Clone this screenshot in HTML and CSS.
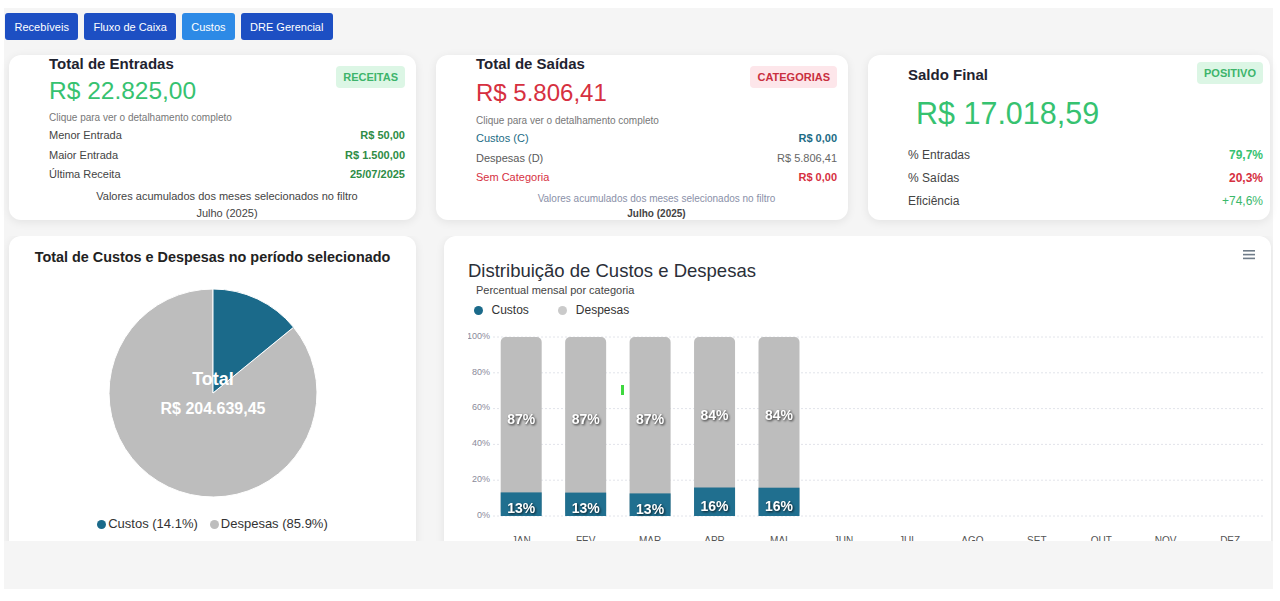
FILE: index.html
```html
<!DOCTYPE html>
<html lang="pt-BR">
<head>
  <meta charset="UTF-8">
  <title>Custos</title>
  <link rel="stylesheet" href="styles.css">
</head>
<body>
  <div class="page">
    <!-- Abas -->
    <nav class="tabs">
      <button class="tab">Recebíveis</button>
      <button class="tab">Fluxo de Caixa</button>
      <button class="tab active">Custos</button>
      <button class="tab">DRE Gerencial</button>
    </nav>

    <!-- Resumo -->
    <div class="top-row">
      <div class="card summary entradas">
        <div class="summary-head">
          <div>
            <h3 class="summary-title">Total de Entradas</h3>
            <div class="summary-value green">R$ 22.825,00</div>
          </div>
          <span class="badge badge-green">RECEITAS</span>
        </div>
        <p class="hint">Clique para ver o detalhamento completo</p>
        <div class="line"><span>Menor Entrada</span><b class="dk-green">R$ 50,00</b></div>
        <div class="line"><span>Maior Entrada</span><b class="dk-green">R$ 1.500,00</b></div>
        <div class="line"><span>Última Receita</span><b class="dk-green">25/07/2025</b></div>
        <p class="note note-first">Valores acumulados dos meses selecionados no filtro</p>
        <p class="note">Julho (2025)</p>
      </div>

      <div class="card summary saidas">
        <div class="summary-head">
          <div>
            <h3 class="summary-title">Total de Saídas</h3>
            <div class="summary-value red">R$ 5.806,41</div>
          </div>
          <span class="badge badge-red">CATEGORIAS</span>
        </div>
        <p class="hint">Clique para ver o detalhamento completo</p>
        <div class="line teal"><span>Custos (C)</span><b>R$ 0,00</b></div>
        <div class="line muted"><span>Despesas (D)</span><span>R$ 5.806,41</span></div>
        <div class="line red"><span>Sem Categoria</span><b>R$ 0,00</b></div>
        <p class="note note-first">Valores acumulados dos meses selecionados no filtro</p>
        <p class="note period">Julho (2025)</p>
      </div>

      <div class="card summary saldo">
        <div class="summary-head">
          <h3 class="summary-title">Saldo Final</h3>
          <span class="badge badge-green">POSITIVO</span>
        </div>
        <div class="summary-value green">R$ 17.018,59</div>
        <div class="line line-first"><span>% Entradas</span><b class="green">79,7%</b></div>
        <div class="line"><span>% Saídas</span><b class="red">20,3%</b></div>
        <div class="line"><span>Eficiência</span><span class="green">+74,6%</span></div>
      </div>
    </div>

    <!-- Gráficos -->
    <div class="bottom-row">
      <div class="card pie-card">
        <h4 class="pie-title">Total de Custos e Despesas no período selecionado</h4>
        <svg class="pie" width="216" height="216" viewBox="0 0 216 216">
          <path d="M108,108 L188.55,42.21 A104,104 0 1,1 108,4 Z" fill="#bdbdbd" stroke="#fff" stroke-width="1"/>
          <path d="M108,108 L108,4 A104,104 0 0,1 188.55,42.21 Z" fill="#1b6a8a" stroke="#fff" stroke-width="1"/>
          <text x="108" y="94" class="pie-total">Total</text>
          <text x="108" y="123" class="pie-amount">R$ 204.639,45</text>
        </svg>
        <div class="pie-legend">
          <span class="dot dot-teal"></span><span>Custos (14.1%)</span>
          <span class="dot dot-grey"></span><span>Despesas (85.9%)</span>
        </div>
      </div>

      <div class="card bar-card">
        <svg class="menu-icon" width="12" height="10" viewBox="0 0 12 10">
          <rect x="0" y="0" width="12" height="1.6" fill="#6f7c89"/>
          <rect x="0" y="3.8" width="12" height="1.6" fill="#6f7c89"/>
          <rect x="0" y="7.6" width="12" height="1.6" fill="#6f7c89"/>
        </svg>
        <h4 class="bar-title">Distribuição de Custos e Despesas</h4>
        <div class="bar-subtitle">Percentual mensal por categoria</div>
        <div class="bar-legend">
          <span class="dot dot-teal"></span><span>Custos</span>
          <span class="dot dot-grey"></span><span>Despesas</span>
        </div>
        <svg class="bars" width="803" height="225" viewBox="0 0 803 225">
          <g class="grid">
            <line x1="25" y1="12" x2="796" y2="12"/>
            <line x1="25" y1="47.8" x2="796" y2="47.8"/>
            <line x1="25" y1="83.6" x2="796" y2="83.6"/>
            <line x1="25" y1="119.4" x2="796" y2="119.4"/>
            <line x1="25" y1="155.2" x2="796" y2="155.2"/>
            <line x1="25" y1="191" x2="796" y2="191"/>
          </g>
          <g class="y-labels">
            <text x="22" y="14">100%</text>
            <text x="22" y="49.5">80%</text>
            <text x="22" y="85">60%</text>
            <text x="22" y="121">40%</text>
            <text x="22" y="157">20%</text>
            <text x="22" y="193">0%</text>
          </g>

          <!-- JAN -->
          <rect x="32.7" y="12" width="41" height="179" rx="5" fill="#bdbdbd"/>
          <rect x="32.7" y="167.4" width="41" height="23.6" fill="#206f8f"/>
          <!-- FEV -->
          <rect x="97.15" y="12" width="41" height="179" rx="5" fill="#bdbdbd"/>
          <rect x="97.15" y="167.6" width="41" height="23.4" fill="#206f8f"/>
          <!-- MAR -->
          <rect x="161.6" y="12" width="41" height="179" rx="5" fill="#bdbdbd"/>
          <rect x="161.6" y="168.4" width="41" height="22.6" fill="#206f8f"/>
          <!-- APR -->
          <rect x="226.05" y="12" width="41" height="179" rx="5" fill="#bdbdbd"/>
          <rect x="226.05" y="162.5" width="41" height="28.5" fill="#206f8f"/>
          <!-- MAI -->
          <rect x="290.5" y="12" width="41" height="179" rx="5" fill="#bdbdbd"/>
          <rect x="290.5" y="162.7" width="41" height="28.3" fill="#206f8f"/>

          <rect x="153" y="60" width="3" height="10" fill="#3fd83f"/>

          <g class="data-labels">
            <text x="53.2" y="98.5">87%</text>
            <text x="117.65" y="98.5">87%</text>
            <text x="182.1" y="98.5">87%</text>
            <text x="246.55" y="95">84%</text>
            <text x="311" y="95">84%</text>
            <text x="53.2" y="188.3">13%</text>
            <text x="117.65" y="188.3">13%</text>
            <text x="182.1" y="188.6">13%</text>
            <text x="246.55" y="186">16%</text>
            <text x="311" y="186">16%</text>
          </g>

          <g class="x-labels">
            <text x="53.2" y="219">JAN</text>
            <text x="117.65" y="219">FEV</text>
            <text x="182.1" y="219">MAR</text>
            <text x="246.55" y="219">APR</text>
            <text x="311" y="219">MAI</text>
            <text x="375.45" y="219">JUN</text>
            <text x="439.9" y="219">JUL</text>
            <text x="504.35" y="219">AGO</text>
            <text x="568.8" y="219">SET</text>
            <text x="633.25" y="219">OUT</text>
            <text x="697.7" y="219">NOV</text>
            <text x="762.15" y="219">DEZ</text>
          </g>
        </svg>
      </div>
    </div>
  </div>
</body>
</html>
```

FILE: styles.css
```css
* {
  box-sizing: border-box;
}

body {
  margin: 0;
  background: #fff;
  font-family: "Liberation Sans", Arial, sans-serif;
  color: #333;
}

.page {
  margin: 8px 0 0 4px;
  width: 1269px;
  height: 581px;
  background: #f5f5f5;
}

/* abas */
.tabs {
  display: flex;
  gap: 5.5px;
  padding: 5px 0 0 1px;
}

.tab {
  height: 27px;
  padding: 0 9.5px;
  border: 0;
  border-radius: 3px;
  background: #1d4fc3;
  color: #fff;
  font: 11px "Liberation Sans", Arial, sans-serif;
}

.tab.active {
  background: #2d8ae6;
}

/* cards */
.card {
  background: #fff;
  border-radius: 12px;
  box-shadow: 0 2px 10px rgba(0, 0, 0, 0.08);
}

.top-row {
  display: grid;
  grid-template-columns: 407px 412px 402px;
  gap: 20px;
  margin-top: 15px;
  padding-left: 5px;
}

.summary {
  height: 165px;
  padding: 0 11px 0 40px;
}

.summary-head {
  display: flex;
  justify-content: space-between;
  align-items: flex-start;
}

.summary-title {
  margin: 0;
  font-size: 15px;
  line-height: 18px;
  font-weight: 700;
  color: #1f2330;
}

.summary-value {
  font-size: 24px;
  line-height: 28px;
  margin-top: 4px;
}

.badge {
  font-size: 11px;
  font-weight: 700;
  line-height: 22px;
  padding: 0 7px;
  border-radius: 4px;
  margin-top: 11px;
}

.badge-green {
  background: #dcf6e5;
  color: #3db46b;
}

.badge-red {
  background: #fde6ea;
  color: #c92f40;
}

.green {
  color: #36c270;
}

.red {
  color: #d6303f;
}

.dk-green {
  color: #2e8c45;
}

.teal {
  color: #1c6b85;
}

.muted {
  color: #5a5a5a;
}

.hint {
  margin: 6px 0 1px;
  font-size: 10px;
  line-height: 14px;
  color: #777;
}

.line {
  display: flex;
  justify-content: space-between;
  font-size: 11px;
  line-height: 19.5px;
}

.line b {
  font-weight: 700;
}

.note {
  margin: 0;
  text-align: center;
  font-size: 11px;
  line-height: 17px;
  color: #444;
}

/* entradas */
.entradas .summary-value {
  font-size: 24.5px;
}

.entradas .line {
  color: #444;
}

.entradas .note-first {
  margin-top: 3px;
}

/* saidas */
.saidas .summary-value {
  margin-top: 6px;
}

.saidas .hint {
  margin: 7px 0 1px;
}

.saidas .line.muted span:last-child {
  color: #666;
}

.saidas .note {
  font-size: 10px;
  line-height: 15px;
  color: #8a90a8;
}

.saidas .note-first {
  margin-top: 3px;
}

.saidas .note.period {
  font-weight: 700;
  color: #444;
}

/* saldo */
.saldo {
  padding-right: 7px;
}

.saldo .summary-title {
  margin-top: 11px;
}

.saldo .badge {
  margin-top: 7px;
}

.saldo .summary-value {
  margin: 12px 0 0 8px;
  font-size: 30.5px;
  line-height: 34px;
}

.saldo .line {
  font-size: 12px;
  line-height: 23px;
  color: #444;
}

.saldo .line-first {
  margin-top: 13.5px;
}

.saldo .line span.green {
  color: #3ab86a;
}

/* graficos */
.bottom-row {
  display: grid;
  grid-template-columns: 407px 827px;
  gap: 28px;
  margin-top: 16px;
  padding-left: 5px;
  height: 305px;
  overflow: hidden;
}

.pie-card,
.bar-card {
  height: 330px;
  position: relative;
}

.pie-title {
  margin: 0;
  padding-top: 13px;
  text-align: center;
  font-size: 14.4px;
  line-height: 16px;
  font-weight: 700;
  color: #222;
}

.pie {
  display: block;
  margin: 20px auto 0;
}

.pie-total {
  fill: #fff;
  font-size: 18px;
  font-weight: 700;
  text-anchor: middle;
  dominant-baseline: central;
}

.pie-amount {
  fill: #fff;
  font-size: 16px;
  font-weight: 700;
  text-anchor: middle;
  dominant-baseline: central;
}

.pie-legend {
  display: flex;
  justify-content: center;
  align-items: center;
  gap: 2px;
  margin-top: 15px;
  font-size: 13px;
  line-height: 16px;
  color: #333;
}

.pie-legend .dot-grey {
  margin-left: 10px;
}

.dot {
  display: inline-block;
  width: 9px;
  height: 9px;
  border-radius: 50%;
}

.dot-teal {
  background: #1b6a8a;
}

.dot-grey {
  background: #bdbdbd;
}

.bar-card {
  padding-left: 24px;
}

.menu-icon {
  position: absolute;
  top: 14px;
  right: 16px;
}

.bar-title {
  margin: 24px 0 0;
  font-size: 18.5px;
  line-height: 22px;
  font-weight: 400;
  color: #2b2f38;
}

.bar-subtitle {
  margin-top: 1px;
  padding-left: 8px;
  font-size: 11px;
  line-height: 14px;
  color: #444;
}

.bar-legend {
  display: flex;
  align-items: center;
  margin: 6px 0 0 5.5px;
  font-size: 12px;
  line-height: 14px;
  color: #333;
}

.bar-legend .dot {
  margin-right: 9px;
}

.bar-legend .dot-grey {
  margin-left: 29px;
  opacity: 0.8;
}

.bars {
  display: block;
  margin-top: 8px;
}

.grid line {
  stroke: #e2e4ea;
  stroke-width: 1;
  stroke-dasharray: 2 2;
}

.y-labels text {
  font-size: 9px;
  fill: #8a8a9a;
  text-anchor: end;
}

.data-labels text {
  font-size: 14px;
  font-weight: 700;
  fill: #fff;
  text-anchor: middle;
  filter: drop-shadow(1px 1px 1px rgba(0, 0, 0, 0.75));
}

.x-labels text {
  font-size: 10px;
  fill: #555;
  text-anchor: middle;
}
```
